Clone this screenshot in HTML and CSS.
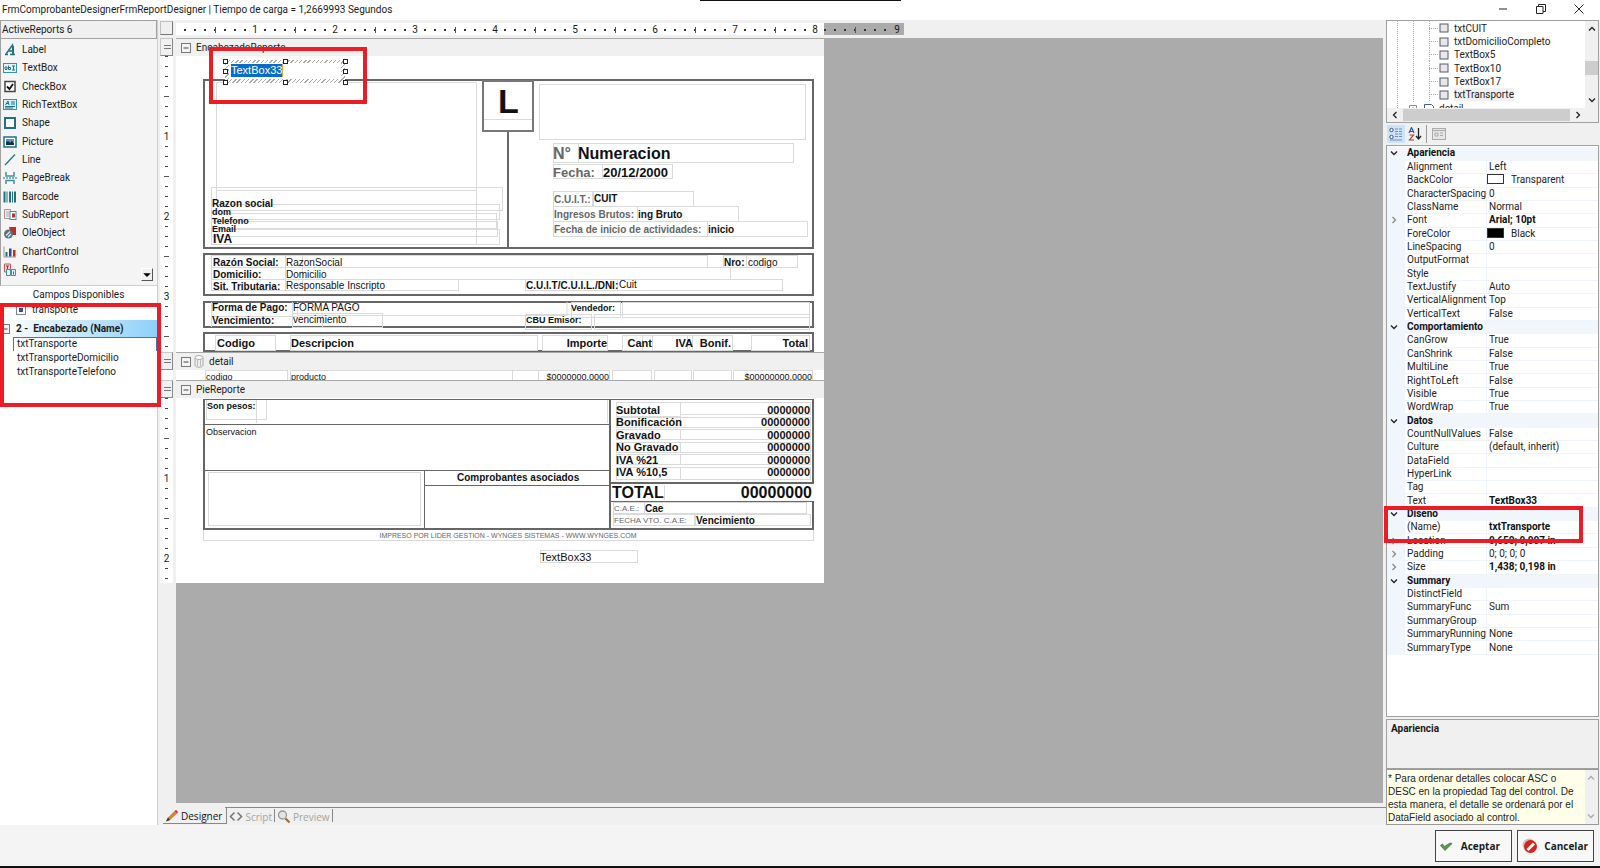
FILE: index.html
```html
<!DOCTYPE html>
<html lang="es">
<head>
<meta charset="utf-8">
<title>FrmComprobanteDesignerFrmReportDesigner</title>
<link rel="stylesheet" href="styles.css">
</head>
<body>
<svg class="defs" aria-hidden="true">
  <defs>
    <symbol id="chev-down" viewBox="0 0 8 8"><path d="M1 2.5 4 5.5 7 2.5" fill="none" stroke="currentColor" stroke-width="1.3"/></symbol>
    <symbol id="chev-up" viewBox="0 0 8 8"><path d="M1 5.5 4 2.5 7 5.5" fill="none" stroke="currentColor" stroke-width="1.3"/></symbol>
    <symbol id="chev-right" viewBox="0 0 8 8"><path d="M2.5 1 5.5 4 2.5 7" fill="none" stroke="currentColor" stroke-width="1.3"/></symbol>
    <symbol id="chev-left" viewBox="0 0 8 8"><path d="M5.5 1 2.5 4 5.5 7" fill="none" stroke="currentColor" stroke-width="1.3"/></symbol>
    <symbol id="minus-box" viewBox="0 0 10 10"><rect x=".5" y=".5" width="9" height="9" fill="#f4f4f4" stroke="#777"/><path d="M2.5 5h5" stroke="#444"/></symbol>
    <symbol id="node" viewBox="0 0 10 10"><rect x="1" y="1" width="8" height="8" fill="#e8e8e8" stroke="#555b70"/></symbol>
  </defs>
</svg>

<header class="titlebar">
  <h1 class="title">FrmComprobanteDesignerFrmReportDesigner | Tiempo de carga = 1,2669993 Segundos</h1>
  <div class="window-buttons">
    <button type="button" aria-label="Minimizar"><svg viewBox="0 0 10 10"><path d="M1 5h8" stroke="#222"/></svg></button>
    <button type="button" aria-label="Restaurar"><svg viewBox="0 0 10 10"><path d="M.5 2.5h6.500v7h-6.500zM2.500 2.500v-2h7v7h-2.500" fill="none" stroke="#222"/></svg></button>
    <button type="button" aria-label="Cerrar"><svg viewBox="0 0 10 10"><path d="M.5.5l9 9M9.500.5l-9 9" stroke="#222"/></svg></button>
  </div>
</header>

<main class="workspace">
  <aside class="left-panel">
    <h2 class="toolbox-title">ActiveReports 6</h2>
    <div class="toolbox">
      <ul class="tool-list">
        <li><button type="button"><svg viewBox="0 0 14 14"><path d="M2 11.500h3M7 11.500h5M3 11 9.500 2l1 9.500M5.500 8h5" fill="none" stroke="#1d7285" stroke-width="1.400"/><path d="M9 3v8h2V3z" fill="#1d7285"/></svg>Label</button></li>
        <li><button type="button"><svg viewBox="0 0 14 14"><rect x=".5" y="2.500" width="13" height="9" fill="#e7f4f6" stroke="#3a93a5"/><path d="M2 8V6h2v2.500H2M5.500 4.500v4h2V6.500h-2M9 5h3M10.500 5v4M9 9h3" fill="none" stroke="#1d7285"/></svg>TextBox</button></li>
        <li><button type="button"><svg viewBox="0 0 14 14"><rect x="2" y="1.500" width="10" height="10" fill="#fff" stroke="#444" stroke-width="1.500"/><path d="M4 6.500 6.500 9 10 4" fill="none" stroke="#111" stroke-width="1.800"/></svg>CheckBox</button></li>
        <li><button type="button"><svg viewBox="0 0 14 14"><rect x=".5" y="1.500" width="13" height="10" fill="#d9eef2" stroke="#3a93a5"/><path d="M2.500 7 5 3l1 4M3.500 5.500h2M8 4h4M8 6h4M2 8.500h10M2 10h8" stroke="#1d7285" fill="none"/></svg>RichTextBox</button></li>
        <li><button type="button"><svg viewBox="0 0 14 14"><rect x="2" y="2" width="10" height="10" fill="#fff" stroke="#1d7285" stroke-width="2"/></svg>Shape</button></li>
        <li><button type="button"><svg viewBox="0 0 14 14"><rect x="1" y="2" width="12" height="10" fill="#fff" stroke="#1d7285" stroke-width="1.500"/><path d="M3 4h8v3H3z" fill="#5b95c5"/><path d="M3 10V7l2-1 2 1.500L9 6l2 2v2z" fill="#163040"/></svg>Picture</button></li>
        <li><button type="button"><svg viewBox="0 0 14 14"><path d="M2 12 12 1.500" stroke="#1d7285" stroke-width="1.300"/></svg>Line</button></li>
        <li><button type="button"><svg viewBox="0 0 14 14"><path d="M3 1v4h8V1M3 13V9.500h8V13" fill="#fff" stroke="#3a93a5" stroke-width="1.500"/><path d="M0 7h14" stroke="#1d7285" stroke-dasharray="2 1"/></svg>PageBreak</button></li>
        <li><button type="button"><svg viewBox="0 0 14 14"><path d="M1.500 1.500v11M7 1.500v11M12 1.500v11" stroke="#1d7285" stroke-width="2"/><path d="M4 1.500v11M9.500 1.500v11" stroke="#1d7285"/></svg>Barcode</button></li>
        <li><button type="button"><svg viewBox="0 0 14 14"><path d="M1.500 1.500h6v9h-6z" fill="#eee" stroke="#999"/><path d="M3 4h3M3 6h3M3 8h3" stroke="#aaa"/><rect x="7" y="3.500" width="6" height="8" fill="#fff" stroke="#3a93a5"/><rect x="9" y="5.500" width="3" height="4" fill="#a33"/></svg>SubReport</button></li>
        <li><button type="button"><svg viewBox="0 0 14 14"><path d="M6 1h7v8H8z" fill="#c8281e"/><circle cx="5.500" cy="8" r="4.500" fill="#56757b"/><path d="M3 9.500 7 5.500M5 11l3-3" stroke="#d7e8ea" stroke-width="1.300"/></svg>OleObject</button></li>
        <li><button type="button"><svg viewBox="0 0 14 14"><path d="M1 1.500v10.500h12" fill="none" stroke="#999"/><path d="M2.500 7h2v4.500h-2z" fill="#1d7285"/><path d="M6 3.500h2.500v8H6z" fill="#2d46a0"/><path d="M10 5h2.500v6.500H10z" fill="#c8281e"/></svg>ChartControl</button></li>
        <li><button type="button"><svg viewBox="0 0 14 14"><path d="M1.500 1h6v8h-6z" fill="#f7dada" stroke="#c55"/><path d="M3 3h3M4.500 3v4" stroke="#b22"/><path d="M3.500 6.500h4v6h-4zM8.500 6.500h4v6h-4z" fill="#e7f4f6" stroke="#3a93a5"/><path d="M10.500 8.500v3" stroke="#1d7285"/></svg>ReportInfo</button></li>
      </ul>
      <button type="button" class="scroll-more" aria-label="Más"><svg viewBox="0 0 8 8"><path d="M1 2.500h6L4 5.500z"/></svg></button>
    </div>
    <h2 class="fields-title">Campos Disponibles</h2>
    <div class="fields">
      <div class="field-node"><svg viewBox="0 0 10 10"><rect x=".5" y=".5" width="9" height="9" fill="#fff" stroke="#7a84a8"/><path d="M3 3h4v4H3z" fill="#3d4c8e"/></svg>transporte</div>
      <div class="field-group"><svg viewBox="0 0 10 10"><use href="#minus-box"/></svg>2 - &nbsp;Encabezado (Name)</div>
      <ul class="field-list">
        <li class="current">txtTransporte</li>
        <li>txtTransporteDomicilio</li>
        <li>txtTransporteTelefono</li>
      </ul>
      <span class="mark mark-fields"></span>
    </div>
  </aside>

  <section class="designer" aria-label="Designer">
    <div class="surface">
      <div class="ruler-row">
        <span class="ruler-corner"></span>
        <div class="h-ruler">
          <div class="h-scale"><span>1</span><span>2</span><span>3</span><span>4</span><span>5</span><span>6</span><span>7</span><span>8</span></div>
          <div class="h-scale outside"><span>9</span></div>
        </div>
      </div>

      <div class="band">
        <div class="v-ruler"><span class="grip"></span><div class="v-scale"><span>1</span><span>2</span><span>3</span></div></div>
        <div class="page">
          <h3 class="band-title"><svg viewBox="0 0 10 10"><use href="#minus-box"/></svg>EncabezadoReporte</h3>
          <svg class="sheet head-sheet" viewBox="176 56 648 296">
            <g class="thick">
              <rect x="204" y="80" width="609" height="168"/><path d="M508 131V248"/>
              <rect x="204" y="254" width="609" height="41"/>
              <rect x="204" y="302" width="609" height="25"/>
              <rect x="204" y="333" width="609" height="18"/>
            </g>
            <g class="thin">
              <path d="M216.500 199V82.500h260v162h-265M216.500 190.500h260"/>
              <rect x="211.500" y="187.500" width="291" height="23"/><rect x="211.500" y="204.500" width="288" height="15"/>
              <rect x="211.500" y="213.500" width="285" height="15"/><rect x="211.500" y="221.500" width="286" height="15"/><rect x="211.500" y="229.500" width="288" height="15"/>
              <rect x="539.500" y="84.500" width="266" height="55"/>
              <rect x="553.500" y="143.500" width="25" height="19"/><rect x="578.500" y="143.500" width="215" height="19"/>
              <rect x="553.500" y="164.500" width="49" height="14"/><rect x="602.500" y="164.500" width="70" height="14"/>
              <rect x="553.500" y="191.500" width="39" height="15"/><rect x="593.500" y="191.500" width="100" height="15"/>
              <rect x="553.500" y="206.500" width="84" height="15"/><rect x="637.500" y="206.500" width="101" height="15"/>
              <rect x="553.500" y="221.500" width="154" height="15"/><rect x="707.500" y="221.500" width="100" height="15"/>
              <rect x="211.500" y="255.500" width="74" height="12"/><rect x="285.500" y="255.500" width="422" height="12"/>
              <rect x="211.500" y="267.500" width="74" height="12"/><rect x="285.500" y="267.500" width="445" height="12"/>
              <rect x="211.500" y="279.500" width="74" height="11"/><rect x="285.500" y="279.500" width="173" height="11"/><path d="M302.500 256v34"/>
              <rect x="723.500" y="255.500" width="23" height="12"/><rect x="746.500" y="255.500" width="51" height="12"/>
              <rect x="525.500" y="279.500" width="92" height="11"/><rect x="617.500" y="279.500" width="165" height="11"/>
              <path d="M211.500 302v25M292.500 302v25M297.500 302v13M322.500 313v14M211 316.500h86M297 315.500H567V302"/>
              <rect x="292.500" y="313.500" width="90" height="14"/>
              <rect x="571.500" y="302.500" width="49" height="15"/><rect x="622.500" y="302.500" width="187" height="15"/>
              <rect x="525.500" y="314.500" width="66" height="15"/><rect x="594.500" y="314.500" width="215" height="15"/>
              <rect x="215.500" y="335.500" width="60" height="15"/><rect x="290.500" y="335.500" width="247" height="15"/>
              <rect x="542.500" y="335.500" width="65" height="15"/><rect x="622.500" y="335.500" width="30" height="15"/><path d="M642.500 336v15M687.500 336v15"/>
              <rect x="652.500" y="335.500" width="40" height="15"/><rect x="692.500" y="335.500" width="40" height="15"/><rect x="751.500" y="335.500" width="58" height="15"/>
            </g>
            <g class="thick"><path class="letter-box" d="M483 81h50v50h-50z"/></g>
            <path class="thin" d="M484 119.500h48"/>
            <text class="t34 b" x="498" y="113">L</text>
            <g class="t10 b">
              <text x="212" y="207">Razon social</text>
              <text x="594" y="202">CUIT</text><text x="638" y="218">ing Bruto</text><text x="708" y="233">inicio</text>
              <text x="213" y="266">Razón Social:</text><text x="213" y="278">Domicilio:</text><text x="213" y="290">Sit. Tributaria:</text>
              <text x="724" y="266">Nro:</text><text x="526" y="289">C.U.I.T/C.U.I.L./DNI:</text>
              <text x="212" y="311">Forma de Pago:</text><text x="212" y="324">Vencimiento:</text>
            </g>
            <g class="t9 b"><text x="212" y="215">dom</text><text x="212" y="224">Telefono</text><text x="212" y="232">Email</text></g>
            <text class="t12 b" x="213" y="243">IVA</text>
            <g class="b muted">
              <text class="t16" x="553" y="159">N°</text><text class="t13" x="553" y="177">Fecha:</text>
              <text class="t10" x="554" y="203">C.U.I.T.:</text><text class="t10" x="554" y="218">Ingresos Brutos:</text><text class="t10" x="554" y="233">Fecha de inicio de actividades:</text>
            </g>
            <text class="t16 b" x="578" y="159">Numeracion</text>
            <text class="t13 b" x="603" y="177">20/12/2000</text>
            <g class="t10">
              <text x="286" y="266">RazonSocial</text><text x="286" y="278">Domicilio</text><text x="286" y="289">Responsable Inscripto</text>
              <text x="748" y="266">codigo</text><text x="619" y="288">Cuit</text>
              <text x="293" y="311">FORMA PAGO</text><text x="293" y="323">vencimiento</text>
            </g>
            <g class="t9 b"><text x="571" y="311">Vendedor:</text><text x="526" y="323">CBU Emisor:</text></g>
            <g class="t11 b">
              <text x="217" y="347">Codigo</text><text x="291" y="347">Descripcion</text>
              <g text-anchor="end"><text x="607" y="347">Importe</text><text x="652" y="347">Cant</text><text x="693" y="347">IVA</text><text x="731" y="347">Bonif.</text><text x="808" y="347">Total</text></g>
            </g>
          </svg>
          <div class="selection">
            <input class="edit-box" value="TextBox33" aria-label="txtTransporte">
            <span class="edit-highlight">TextBox33</span>
            <svg class="handles" viewBox="0 0 126 27">
              <g><rect x="1.500" y="1.500" width="4" height="4"/><rect x="61.500" y="1.500" width="4" height="4"/><rect x="121.500" y="1.500" width="4" height="4"/><rect x="1.500" y="11.500" width="4" height="4"/><rect x="121.500" y="11.500" width="4" height="4"/><rect x="1.500" y="22.500" width="4" height="4"/><rect x="61.500" y="22.500" width="4" height="4"/><rect x="121.500" y="22.500" width="4" height="4"/></g>
            </svg>
          </div>
          <span class="mark mark-box"></span>
        </div>
      </div>

      <div class="band">
        <div class="v-ruler"><span class="grip"></span></div>
        <div class="page">
          <h3 class="band-title"><svg viewBox="0 0 10 10"><use href="#minus-box"/></svg><svg class="db" viewBox="0 0 10 13"><path d="M1 3v7c0 3 8 3 8 0V3" fill="#eee" stroke="#aaa"/><ellipse cx="5" cy="2.500" rx="4" ry="2" fill="#fff" stroke="#aaa"/><path d="M3.500 5v6M6.500 5v6" stroke="#bbb"/></svg>detail</h3>
          <svg class="sheet detail-sheet" viewBox="176 370 648 10">
            <g class="thin">
              <rect x="205.500" y="370.500" width="82" height="15"/><rect x="290.500" y="370.500" width="222" height="15"/><rect x="512.500" y="370.500" width="26" height="15"/>
              <rect x="538.500" y="370.500" width="71" height="15"/><rect x="612.500" y="370.500" width="39" height="15"/><rect x="654.500" y="370.500" width="37" height="15"/><rect x="693.500" y="370.500" width="38" height="15"/><rect x="733.500" y="370.500" width="79" height="15"/>
            </g>
            <g class="t9"><text x="206" y="380">codigo</text><text x="291" y="380">producto</text><text x="609" y="380" text-anchor="end">$0000000.0000</text><text x="812" y="380" text-anchor="end">$00000000.0000</text></g>
          </svg>
        </div>
      </div>

      <div class="band">
        <div class="v-ruler"><span class="grip"></span><div class="v-scale"><span>1</span><span>2</span></div></div>
        <div class="page">
          <h3 class="band-title"><svg viewBox="0 0 10 10"><use href="#minus-box"/></svg>PieReporte</h3>
          <svg class="sheet foot-sheet" viewBox="176 398 648 185">
            <g class="thin">
              <path d="M206.500 399v20.500h60V399M256.500 399v24M607.500 400v23"/><rect x="208.500" y="472.500" width="212" height="53"/><rect x="203.500" y="529.500" width="610" height="11"/>
              <rect x="616.500" y="402.500" width="64" height="14"/><rect x="680.500" y="402.500" width="130" height="12"/>
              <rect x="616.500" y="417.500" width="64" height="10"/><rect x="680.500" y="417.500" width="130" height="10"/>
              <rect x="616.500" y="429.500" width="64" height="10"/><rect x="680.500" y="429.500" width="130" height="10"/>
              <rect x="616.500" y="442.500" width="64" height="10"/><rect x="680.500" y="442.500" width="130" height="10"/>
              <rect x="616.500" y="454.500" width="64" height="10"/><rect x="680.500" y="454.500" width="130" height="10"/>
              <rect x="616.500" y="467.500" width="64" height="12"/><rect x="680.500" y="467.500" width="130" height="12"/>
              <rect x="613.500" y="502.500" width="31" height="11"/><rect x="644.500" y="502.500" width="162" height="11"/>
              <rect x="613.500" y="514.500" width="81" height="11"/><rect x="695.500" y="514.500" width="115" height="11"/>
              <path d="M664.500 485v15"/><rect x="540.500" y="550.500" width="97" height="12"/>
            </g>
            <g class="thick">
              <path d="M204 529V399M610 399v130M203 529h611M611 483h203M813 399V483M813 502V529"/>
            </g>
            <g class="medium">
              <path d="M203 399.500h611M204 424.500h406M204 470.500h406M424.500 470v59M424 485.500h186M610 501.500h204"/>
            </g>
            <g class="t9"><text class="b" x="207" y="409">Son pesos:</text><text x="206" y="435">Observacion</text></g>
            <text class="t10 b" x="457" y="481">Comprobantes asociados</text>
            <text class="t7 muted" x="508" y="538" text-anchor="middle">IMPRESO POR LIDER GESTION - WYNGES SISTEMAS - WWW.WYNGES.COM</text>
            <g class="t11 b">
              <text x="616" y="414">Subtotal</text><text x="616" y="426">Bonificación</text><text x="616" y="439">Gravado</text><text x="616" y="451">No Gravado</text><text x="616" y="464">IVA %21</text><text x="616" y="476">IVA %10,5</text>
              <g text-anchor="end"><text x="810" y="414">0000000</text><text x="810" y="426">00000000</text><text x="810" y="439">0000000</text><text x="810" y="451">0000000</text><text x="810" y="464">0000000</text><text x="810" y="476">0000000</text></g>
            </g>
            <g class="t16 b"><text x="612" y="498">TOTAL</text><text x="812" y="498" text-anchor="end">00000000</text></g>
            <g class="t8 muted"><text x="614" y="511">C.A.E.:</text><text x="614" y="523">FECHA VTO. C.A.E:</text></g>
            <g class="t10 b"><text x="645" y="512">Cae</text><text x="696" y="524">Vencimiento</text></g>
            <text class="t11" x="540" y="561">TextBox33</text>
          </svg>
        </div>
      </div>
      <div class="surface-rest"></div>
    </div>
    <nav class="tabs">
      <button type="button" class="tab active"><svg viewBox="0 0 14 14"><path d="M1 12.500 3 8.500 9.500 2 12 4.500 5 11z" fill="#d9822b"/><path d="M9.500 2 11 1l2 2-1 1.500z" fill="#d22"/><path d="M1 12.500 3 8.500 5 11z" fill="#333"/></svg>Designer</button>
      <button type="button" class="tab"><svg viewBox="0 0 14 14"><path d="M5.500 2.500 1.500 6.500l4 4M8.500 2.500l4 4-4 4" fill="none" stroke="#777" stroke-width="1.600"/></svg>Script</button>
      <button type="button" class="tab"><svg viewBox="0 0 14 14"><circle cx="5.500" cy="5" r="4" fill="#dfe6ea" stroke="#999" stroke-width="1.300"/><path d="M8.500 8.500 12.500 12.500" stroke="#a9683a" stroke-width="2.300"/></svg>Preview</button>
    </nav>
  </section>

  <aside class="right-panel">
    <div class="outline">
      <ul class="outline-list">
        <li><svg viewBox="0 0 10 10"><use href="#node"/></svg><span>txtCUIT</span></li>
        <li><svg viewBox="0 0 10 10"><use href="#node"/></svg><span>txtDomicilioCompleto</span></li>
        <li><svg viewBox="0 0 10 10"><use href="#node"/></svg><span>TextBox5</span></li>
        <li><svg viewBox="0 0 10 10"><use href="#node"/></svg><span>TextBox10</span></li>
        <li><svg viewBox="0 0 10 10"><use href="#node"/></svg><span>TextBox17</span></li>
        <li><svg viewBox="0 0 10 10"><use href="#node"/></svg><span class="chosen">txtTransporte</span></li>
        <li class="outline-band"><svg viewBox="0 0 28 10"><path d="M.5 2.500h7v7h-7zM2 6h4M4 4v4" fill="#fff" stroke="#888"/><path d="M15.500 1.500h7l2 2v7h-9zM15 5.500h10" fill="#fff" stroke="#4a5a86"/></svg><span>detail</span></li>
      </ul>
      <div class="v-scroll"><svg viewBox="0 0 8 8"><use href="#chev-up"/></svg><i></i><svg viewBox="0 0 8 8"><use href="#chev-down"/></svg></div>
      <div class="h-scroll"><svg viewBox="0 0 8 8"><use href="#chev-left"/></svg><i></i><svg viewBox="0 0 8 8"><use href="#chev-right"/></svg></div>
    </div>
    <div class="prop-tools">
      <button type="button" class="on" aria-label="Por categorías"><svg viewBox="0 0 14 14"><circle cx="2.500" cy="3" r="1.700" fill="#fff" stroke="#3d4c8e"/><circle cx="2.500" cy="10" r="1.700" fill="#fff" stroke="#3d4c8e"/><path d="M6 2h3M10 2h3M6 4.500h3M10 4.500h3M6 7h3M10 7h3M6 9.500h3M10 9.500h3M1 13h12" stroke="#7c8aa8"/></svg></button>
      <button type="button" aria-label="Alfabético"><svg viewBox="0 0 14 14"><path d="M1 6 3.500.5 6 6M2 4.500h3" fill="none" stroke="#2455a4" stroke-width="1.200"/><path d="M1.500 8h4l-4 5h4.500" fill="none" stroke="#a1422e" stroke-width="1.200"/><path d="M10.500 1v10M8 9l2.500 3L13 9" fill="none" stroke="#222" stroke-width="1.300"/></svg></button>
      <button type="button" class="pages" aria-label="Páginas de propiedades"><svg viewBox="0 0 14 14"><rect x=".5" y="1.500" width="13" height="11" fill="#e6e6e6" stroke="#aaa"/><path d="M1 3.500h12M3 6h3v3H3zM8 6h3M8 8.500h3" fill="none" stroke="#aaa"/></svg></button>
    </div>
    <div class="props">
      <table>
        <colgroup><col class="c-gutter"><col class="c-name"><col></colgroup>
        <tbody>
        <tr class="cat"><td><svg viewBox="0 0 8 8"><use href="#chev-down"/></svg></td><th colspan="2">Apariencia</th></tr>
        <tr><td></td><th>Alignment</th><td>Left</td></tr>
        <tr><td></td><th>BackColor</th><td><i class="swatch"></i>Transparent</td></tr>
        <tr><td></td><th>CharacterSpacing</th><td>0</td></tr>
        <tr><td></td><th>ClassName</th><td>Normal</td></tr>
        <tr><td class="more"><svg viewBox="0 0 8 8"><use href="#chev-right"/></svg></td><th>Font</th><td class="set">Arial; 10pt</td></tr>
        <tr><td></td><th>ForeColor</th><td><i class="swatch black"></i>Black</td></tr>
        <tr><td></td><th>LineSpacing</th><td>0</td></tr>
        <tr><td></td><th>OutputFormat</th><td></td></tr>
        <tr><td></td><th>Style</th><td></td></tr>
        <tr><td></td><th>TextJustify</th><td>Auto</td></tr>
        <tr><td></td><th>VerticalAlignment</th><td>Top</td></tr>
        <tr><td></td><th>VerticalText</th><td>False</td></tr>
        <tr class="cat"><td><svg viewBox="0 0 8 8"><use href="#chev-down"/></svg></td><th colspan="2">Comportamiento</th></tr>
        <tr><td></td><th>CanGrow</th><td>True</td></tr>
        <tr><td></td><th>CanShrink</th><td>False</td></tr>
        <tr><td></td><th>MultiLine</th><td>True</td></tr>
        <tr><td></td><th>RightToLeft</th><td>False</td></tr>
        <tr><td></td><th>Visible</th><td>True</td></tr>
        <tr><td></td><th>WordWrap</th><td>True</td></tr>
        <tr class="cat"><td><svg viewBox="0 0 8 8"><use href="#chev-down"/></svg></td><th colspan="2">Datos</th></tr>
        <tr><td></td><th>CountNullValues</th><td>False</td></tr>
        <tr><td></td><th>Culture</th><td>(default, inherit)</td></tr>
        <tr><td></td><th>DataField</th><td></td></tr>
        <tr><td></td><th>HyperLink</th><td></td></tr>
        <tr><td></td><th>Tag</th><td></td></tr>
        <tr><td></td><th>Text</th><td class="set">TextBox33</td></tr>
        <tr class="cat"><td><svg viewBox="0 0 8 8"><use href="#chev-down"/></svg></td><th colspan="2">Diseño</th></tr>
        <tr><td></td><th>(Name)</th><td class="set">txtTransporte</td></tr>
        <tr><td class="more"><svg viewBox="0 0 8 8"><use href="#chev-right"/></svg></td><th>Location</th><td class="set">0,650; 0,007 in</td></tr>
        <tr><td class="more"><svg viewBox="0 0 8 8"><use href="#chev-right"/></svg></td><th>Padding</th><td>0; 0; 0; 0</td></tr>
        <tr><td class="more"><svg viewBox="0 0 8 8"><use href="#chev-right"/></svg></td><th>Size</th><td class="set">1,438; 0,198 in</td></tr>
        <tr class="cat"><td><svg viewBox="0 0 8 8"><use href="#chev-down"/></svg></td><th colspan="2">Summary</th></tr>
        <tr><td></td><th>DistinctField</th><td></td></tr>
        <tr><td></td><th>SummaryFunc</th><td>Sum</td></tr>
        <tr><td></td><th>SummaryGroup</th><td></td></tr>
        <tr><td></td><th>SummaryRunning</th><td>None</td></tr>
        <tr><td></td><th>SummaryType</th><td>None</td></tr>
        </tbody>
      </table>
      <span class="mark mark-name"></span>
    </div>
    <div class="prop-help">Apariencia</div>
    <div class="note">
      <textarea readonly aria-label="Ayuda">* Para ordenar detalles colocar ASC o DESC en la propiedad Tag del control. De esta manera, el detalle se ordenará por el DataField asociado al control.</textarea>
      <div class="note-scroll"><svg viewBox="0 0 8 8"><use href="#chev-up"/></svg><svg viewBox="0 0 8 8"><use href="#chev-down"/></svg></div>
    </div>
  </aside>
</main>

<footer class="actions">
  <button type="button"><svg viewBox="0 0 14 14"><path d="M1.500 6.500 3.500 5l2 2.500L11 4l2 .5L6 11.500z" fill="#5a9a4a" stroke="#3d6b35" stroke-width=".7"/></svg>Aceptar</button>
  <button type="button"><svg class="big" viewBox="0 0 16 16"><circle cx="7" cy="7" r="6.500" fill="#c9c4bd"/><circle cx="8.500" cy="8.500" r="6.500" fill="#d8211d"/><path d="M4.500 11 11 4.500l2 2L6.500 13z" fill="#fff"/></svg>Cancelar</button>
</footer>
</body>
</html>
```
FILE: styles.css
```css
* { box-sizing: border-box; }
:root {
  --ui: "Roboto", sans-serif;
  --wide: "Open Sans", "Noto Sans", sans-serif;
  --arial: "Liberation Sans", Arial, sans-serif;
  --face: #f0f0f0;
  --line: #a0a0a0;
}
body { margin: 0; min-height: 100vh; display: flex; flex-direction: column; background: #f4f4f4; color: #1a1a1a; font: 10px/12px var(--ui); }
h1, h2, h3, ul { margin: 0; padding: 0; font-weight: normal; font-size: inherit; list-style: none; }
button { margin: 0; padding: 0; border: 0; background: none; color: inherit; font: inherit; }
svg { display: block; flex: none; }
.defs { position: absolute; width: 0; height: 0; }

.titlebar { display: flex; justify-content: space-between; height: 20px; background: #fff; position: relative; }
.titlebar::before { content: ""; position: absolute; left: 700px; top: 0; width: 201px; height: 1px; background: #111; }
.title { line-height: 20px; padding-left: 2px; }
.window-buttons { display: flex; align-items: center; gap: 28px; padding: 0 16px 3px 0; }
.window-buttons svg { width: 10px; height: 10px; }

.workspace { flex: 1; display: grid; grid-template-columns: 158px minmax(0, 1fr) 214px; }

.left-panel { display: flex; flex-direction: column; border-right: 1px solid #c3d0dc; background: #f4f4f4; }
.toolbox-title { height: 19px; border: 1px solid var(--line); background: var(--face); padding-left: 1px; line-height: 17px; }
.toolbox { position: relative; height: 247px; padding-top: 2px; border-left: 1px solid var(--line); border-bottom: 1px solid #d0d0d0; }
.tool-list { display: flex; flex-direction: column; height: 238px; }
.tool-list li { flex: 1; display: flex; align-items: center; }
.tool-list button { display: flex; align-items: center; gap: 5px; padding-left: 2px; }
.tool-list svg { width: 14px; height: 14px; }
.scroll-more { position: absolute; right: 4px; bottom: 4px; width: 12px; height: 13px; border: 1px solid #fff; border-right-color: #555; border-bottom-color: #555; background: var(--face); }
.scroll-more svg { width: 10px; height: 10px; }
.fields-title { height: 17px; background: #fff; text-align: center; line-height: 17px; }
.fields { position: relative; flex: 1; background: #fff; }
.field-node { display: flex; gap: 6px; align-items: center; height: 17px; padding: 0 0 4px 16px; }
.field-node svg, .field-group svg { width: 10px; height: 10px; }
.field-group { display: flex; gap: 6px; align-items: center; height: 17px; font-weight: bold; background: linear-gradient(90deg, #fff, #8fd0fb); }
.field-list li { height: 14px; margin-left: 13px; padding-left: 4px; line-height: 14px; }
.field-list .current { border: 1px solid #3b79b5; border-bottom: 0; padding-left: 3px; line-height: 12px; }

.mark { position: absolute; z-index: 5; border: 4px solid #ed1c24; pointer-events: none; }
.mark-fields { left: 0; top: 0; width: 161px; height: 104px; }
.mark-box { left: 33px; top: 9px; width: 158px; height: 57px; }
.mark-name { left: -3px; top: 360px; width: 199px; height: 37px; }

.designer { display: flex; flex-direction: column; background: var(--face); padding-left: 2px; }
.surface { flex: 1; display: flex; flex-direction: column; margin-right: 3px; }
.ruler-row { display: flex; gap: 3px; height: 18px; }
.ruler-corner { width: 13px; height: 14px; margin-top: 1px; border: 1px solid #c0c0c0; border-right-color: #777; border-bottom-color: #777; }
.h-ruler { display: flex; height: 12px; margin-top: 3px; }
.h-scale { display: flex; width: 648px; padding-left: 39px; background: linear-gradient(90deg, #555 1px, transparent 1px) 39px 4px / 80px 6px repeat-x, linear-gradient(90deg, #333 2px, transparent 2px) 8px 6px / 10px 2px repeat-x, #fff; }
.h-scale span { flex: none; width: 10px; margin: 0 35px; background: #fff; text-align: center; line-height: 14px; }
.h-scale span:last-child { margin-right: 0; }
.outside { width: 80px; padding-left: 68px; background-position: 31px 4px, 0 6px; background-color: #ababab; }
.outside span { margin: 0; background: #ababab; }

.band { display: flex; gap: 3px; background: linear-gradient(90deg, var(--face) 16px, #ababab 16px); }
.v-ruler { width: 13px; background: #fff; }
.grip { display: block; height: 18px; border: 1px solid #c8c8c8; border-right-color: #888; border-bottom-color: #888; background: linear-gradient(#777 1px, transparent 1px, transparent 3px, #777 3px, #777 4px, transparent 4px) 3px 6px / 7px 5px no-repeat, var(--face); }
.v-scale { padding-top: 41px; height: calc(100% - 18px); background: linear-gradient(#555 1px, transparent 1px) 4px 40px / 5px 80px repeat-y, linear-gradient(#444 1px, transparent 1px) 5px 10px / 3px 10px repeat-y; }
.v-scale span { display: block; height: 10px; margin: 35px 1px 0; background: #fff; text-align: center; line-height: 10px; }
.v-scale span + span { margin-top: 70px; }
.page { position: relative; width: 648px; background: #fff; }
.band-title { display: flex; align-items: center; gap: 5px; height: 18px; padding-left: 5px; border-top: 1px solid #a8a8a8; background: var(--face); line-height: 14px; }
.band-title svg { width: 10px; height: 10px; }
.band-title .db { width: 10px; height: 13px; margin-left: -2px; }
.sheet { width: 100%; font-family: var(--arial); fill: #111; }
.head-sheet { height: 296px; }
.detail-sheet { height: 10px; overflow: hidden; }
.foot-sheet { height: 185px; }
.thick { fill: none; stroke: #666; stroke-width: 2; }
.thick .letter-box { fill: #fff; stroke: #777; }
.medium { fill: none; stroke: #666; stroke-width: 1; }
.thin { fill: none; stroke: #dadada; stroke-width: 1; }
.b { font-weight: bold; }
.muted { fill: #666; }
.t7 { font-size: 7px; }
.t8 { font-size: 8px; }
.t9 { font-size: 9px; }
.t10 { font-size: 10px; }
.t11 { font-size: 11px; }
.t12 { font-size: 12px; }
.t13 { font-size: 13px; }
.t16 { font-size: 16px; }
.t34 { font-size: 34px; }
.selection { position: absolute; left: 46px; top: 20px; width: 126px; height: 27px; padding: 5px 7px; background: repeating-linear-gradient(135deg, #aaa 0 1px, #fff 1px 3px) 3px 2px / 120px 23px no-repeat; }
.edit-box { display: block; width: 112px; height: 16px; padding: 0 1px; border: 0; background: #fff; font: 11px/14px var(--arial); color: #fff; }
.edit-highlight { position: absolute; left: 9px; top: 6px; height: 13px; background: #0a6cc8; color: #fff; font: 11px/13px var(--arial); border-right: 1px solid #f0a030; }
.handles { position: absolute; left: 0; top: 0; width: 126px; height: 27px; fill: #fff; stroke: #222; }
.surface-rest { flex: 1; margin-left: 16px; background: #ababab; }

.tabs { display: flex; height: 22px; padding: 4px 0 0 3px; background: linear-gradient(#888, #888) 65px 4px / 100% 1px no-repeat; font: 10px/16px var(--wide); }
.tab { display: flex; align-items: center; height: 17px; gap: 2px; padding: 2px 4px 0 2px; color: #a5a59a; border-right: 1px solid #888; }
.tab svg { width: 14px; height: 14px; }
.tab:not(.active) { height: 13px; margin-top: 2px; padding-right: 2px; }
.tab.active { color: #111; border-bottom: 1px solid #888; }

.right-panel { display: flex; flex-direction: column; background: var(--face); padding-right: 1px; }
.outline { display: grid; grid-template: 87px 14px / 1fr 13px; height: 103px; border: 1px solid var(--line); background: #fff; color: #222; }
.outline-list { display: flex; flex-direction: column; overflow: hidden; padding-left: 42px; background: linear-gradient(#aaa 1px, transparent 1px) 10px 0 / 1px 2px repeat-y, linear-gradient(#aaa 1px, transparent 1px) 26px 0 / 1px 2px repeat-y; }
.outline-list li { display: flex; flex: none; height: 13px; align-items: center; gap: 5px; }
.outline-list li:nth-child(3n+1) { height: 14px; }
.outline-list li:not(.outline-band) { background: linear-gradient(#aaa 1px, transparent 1px) 0 0 / 1px 2px repeat-y; }
.outline-list li:not(.outline-band)::before { content: ""; width: 10px; height: 1px; margin-right: -5px; background: linear-gradient(90deg, #aaa 1px, transparent 1px) 0 0 / 2px 1px; }
.outline-list span { line-height: 13px; }
.outline-list svg { width: 10px; height: 10px; background: #fff; }
.outline-list .chosen { background: var(--face); }
.outline-list .outline-band { margin-left: -20px; gap: 2px; }
.outline-list .outline-band svg { width: 28px; }
.v-scroll { display: flex; flex-direction: column; align-items: center; padding: 4px 0; background: var(--face); }
.v-scroll i { width: 13px; height: 14px; margin: 28px 0 auto; background: #cdcdcd; }
.v-scroll svg, .h-scroll svg, .note-scroll svg { width: 8px; height: 8px; }
.h-scroll { grid-column: 1 / -1; display: flex; align-items: center; gap: 4px; padding: 0 4px; background: var(--face); }
.h-scroll i { width: 167px; height: 12px; background: #cdcdcd; }
.prop-tools { display: flex; align-items: center; gap: 1px; height: 22px; padding-left: 1px; }
.prop-tools button { padding: 2px; }
.prop-tools svg { width: 14px; height: 14px; }
.prop-tools .on { background: #cbe4f9; }
.prop-tools .pages { margin-left: 1px; padding-left: 5px; border-left: 1px solid #999; }
.props { position: relative; flex: 1; padding-top: 1px; border: 1px solid var(--line); background: #fff; }
.props table { width: 100%; height: 508px; table-layout: fixed; border-collapse: collapse; }
.c-gutter { width: 17px; }
.c-name { width: 82px; }
.props td, .props th { height: 13px; padding: 0 0 0 2px; white-space: nowrap; border: 1px solid #eff3fb; border-width: 0 0 1px 1px; text-align: left; font-size: 10px; line-height: 12px; font-weight: normal; color: #222; }
.props td:first-child { border-color: #f1f5fc; background: #f1f5fc; }
.props svg { width: 8px; height: 8px; }
.props .more { color: #888; }
.props .cat th { background: #f1f5fc; border-color: #f1f5fc; font-weight: bold; color: #111; }
.props .set { font-weight: bold; color: #111; }
.swatch { display: inline-block; width: 17px; height: 10px; margin: 0 7px 0 -2px; border: 1px solid #333; vertical-align: -1px; }
.swatch.black { background: #000; }
.prop-help { height: 50px; margin-top: 2px; padding: 3px 4px; border: 1px solid var(--line); font-weight: bold; }
.note { display: flex; height: 56px; border: 1px solid #999; background: #ffffe9; }
.note textarea { flex: 1; min-width: 0; padding: 2px 1px; border: 0; resize: none; overflow: hidden; background: transparent; color: #222; font: 10px/13px var(--arial); }
.note-scroll { display: flex; flex-direction: column; justify-content: space-between; width: 13px; padding: 4px 2px; background: var(--face); color: #aaa; }

.actions { display: flex; justify-content: flex-end; gap: 5px; height: 43px; padding: 5px 6px 4px; border-bottom: 2px solid #111; }
.actions button { display: flex; align-items: center; justify-content: space-between; width: 77px; padding: 0 11px 0 3px; border: 1px solid #444; background: #f8f8f8; font: bold 10px/16px var(--wide); }
.actions button + button { padding: 0 5px 0 4px; }
.actions svg { width: 14px; height: 14px; }
.actions .big { width: 16px; height: 16px; }
```
